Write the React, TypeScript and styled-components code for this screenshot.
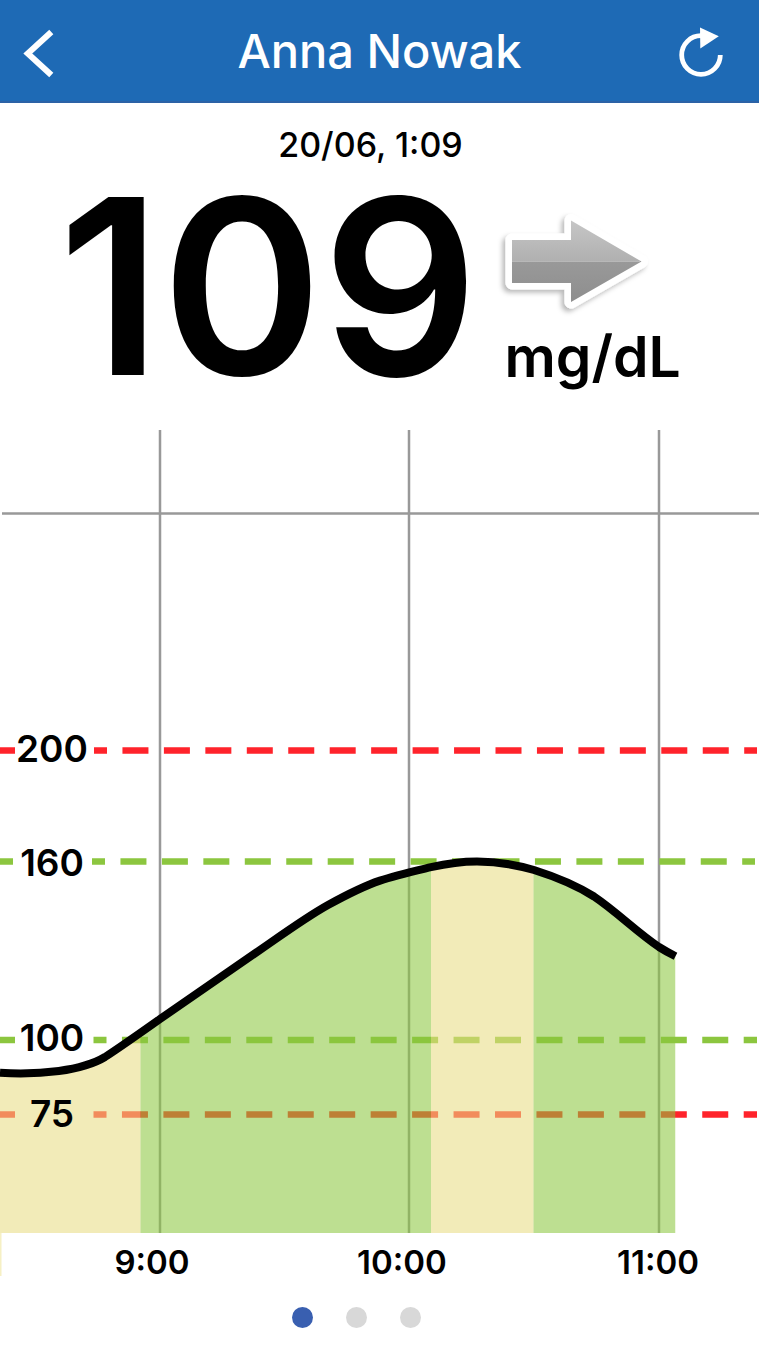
import React, { useState } from "react";
import styled, { createGlobalStyle } from "styled-components";

const GlobalStyle = createGlobalStyle`
  *, *::before, *::after { box-sizing: border-box; }
  body {
    margin: 0;
    background: #fff;
    color: #000;
    font-family: Inter, "Liberation Sans", sans-serif;
  }
`;

const Screen = styled.main`
  display: flex;
  flex-direction: column;
  padding-bottom: 20px;
`;

const TopBar = styled.header`
  display: grid;
  grid-template-columns: 52px 1fr 52px;
  align-items: center;
  height: 103px;
  padding: 0 32px;
  background: #1e6ab5;
  border-bottom: 2px solid #2b62a6;
`;

const IconButton = styled.button`
  display: flex;
  padding: 0;
  border: 0;
  background: none;
  cursor: pointer;
`;

const BackButton = styled(IconButton)`
  margin-left: -16px;
`;

const Title = styled.h1`
  margin: 0;
  color: #fff;
  font-size: 47px;
  line-height: 60px;
  font-weight: 500;
  text-align: center;
`;

const Reading = styled.section`
  display: flex;
  flex-direction: column;
  gap: 20px;
  padding: 22px 18px 41px 0;
`;

const Timestamp = styled.time`
  font-size: 34px;
  line-height: 40px;
  font-weight: 500;
  text-align: center;
`;

const ReadingRow = styled.div`
  display: flex;
  justify-content: center;
  gap: 12px;
  padding-right: 2px;
`;

const Value = styled.strong`
  font-size: 244px;
  line-height: 204px;
  font-weight: 600;
`;

const Side = styled.div`
  display: flex;
  flex-direction: column;
  padding-top: 20px;
`;

const Unit = styled.span`
  padding-left: 14px;
  font-size: 57px;
  line-height: 60px;
  font-weight: 600;
`;

const ChartSvg = styled.svg`
  display: block;
  width: 100%;
  height: auto;
`;

const ChartLabel = styled.text<{ $size: number }>`
  font-size: ${(p) => p.$size}px;
  font-weight: 600;
  text-anchor: middle;
`;

const Pager = styled.nav`
  display: flex;
  justify-content: center;
  gap: 33px;
  padding: 17px 46px 0 0;
`;

const Dot = styled.button<{ $active: boolean }>`
  width: 21px;
  height: 21px;
  padding: 0;
  border: 0;
  border-radius: 50%;
  background: ${(p) => (p.$active ? "#395fb0" : "#d8d8d8")};
  cursor: pointer;
`;

const GREEN = "#8cc63f";
const RED = "#ff232b";

const hours = [
  { label: "9:00", x: 160, labelX: 152 },
  { label: "10:00", x: 409, labelX: 402 },
  { label: "11:00", x: 659, labelX: 658 },
];

const limits = [
  { label: "200", y: 320.5, color: RED, stub: 15, start: 94, end: 757, labelY: 332 },
  { label: "160", y: 431.5, color: GREEN, stub: 13, start: 92, end: 755, labelY: 446 },
  { label: "100", y: 610, color: GREEN, stub: 15, start: 93.5, end: 757, labelY: 621 },
  { label: "75", y: 684.5, color: RED, stub: 15, start: 93.5, end: 757, labelY: 697 },
];

const bands = [
  { from: 0, to: 140.5, color: "#e8dc82" },
  { from: 140.5, to: 431, color: "#8bc73e" },
  { from: 431, to: 533.5, color: "#e8dc82" },
  { from: 533.5, to: 675.5, color: "#8bc73e" },
];

const curve =
  "M0 642.8 C40 645 82 641 105 627 C112 622.5 136 606 160 589 L270 513 C290 499 310 485 328 475 C348 464 364 456 380 450.6 C395 445.500 415 441 431 437.2 C447 433.5 463 431.5 477 431.5 C495 431.5 515 434.5 534 440 C553 446 575 454.5 594 466.5 C617 482 636 501.500 659 517 Q667 522 675.5 526.300";

function Chart() {
  return (
    <ChartSvg viewBox="0 0 759 860" role="img" aria-label="Glucose history">
      <defs>
        <clipPath id="under">
          <path d={`${curve} V803 H0 Z`} />
        </clipPath>
      </defs>
      <g stroke="#999" strokeWidth="2.5">
        <path d="M2 83.500H759" />
        {hours.map((h) => (
          <path key={h.label} d={`M${h.x} 0V803`} />
        ))}
      </g>
      {limits.map((l) => (
        <g key={l.label} stroke={l.color} strokeWidth="6.5">
          <path d={`M0 ${l.y}H${l.stub}`} />
          <path d={`M${l.start} ${l.y}H${l.end}`} strokeDasharray="26 15.450" strokeDashoffset="13" />
        </g>
      ))}
      <g clipPath="url(#under)" fillOpacity="0.57">
        {bands.map((b) => (
          <rect key={b.from} x={b.from} y="400" width={b.to - b.from} height="403" fill={b.color} />
        ))}
      </g>
      <path d="M0.750 803V846" stroke="#f6f0c4" strokeWidth="1.5" />
      <path d={curve} fill="none" stroke="#000" strokeWidth="8" />
      {limits.map((l) => (
        <ChartLabel key={l.label} $size={37} x="52" y={l.labelY}>
          {l.label}
        </ChartLabel>
      ))}
      {hours.map((h) => (
        <ChartLabel key={h.label} $size={33} x={h.labelX} y="844">
          {h.label}
        </ChartLabel>
      ))}
    </ChartSvg>
  );
}

function TrendArrow() {
  const shape = "M22 35H81V15.500L151.500 56.500L81 97V78H22Z";
  return (
    <svg width="170" height="122" viewBox="0 0 170 122" role="img" aria-label="Steady">
      <defs>
        <linearGradient id="metal" x1="0" y1="0" x2="0" y2="1">
          <stop offset="0" stopColor="#c6c6c6" />
          <stop offset="0.5" stopColor="#b0b0b0" />
          <stop offset="0.5" stopColor="#999" />
          <stop offset="1" stopColor="#8e8e8e" />
        </linearGradient>
        <filter id="shade" x="-20%" y="-20%" width="140%" height="140%">
          <feDropShadow dx="-3" dy="3" stdDeviation="2.5" floodColor="#000" floodOpacity="0.28" />
        </filter>
      </defs>
      <path d={shape} fill="#fff" stroke="#fff" strokeWidth="13" strokeLinejoin="round" filter="url(#shade)" />
      <path d={shape} fill="url(#metal)" />
      <path d="M22 56.500H150" stroke="#c0c0c0" strokeWidth="0.800" />
    </svg>
  );
}

export default function App() {
  const [page, setPage] = useState(0);
  return (
    <>
      <GlobalStyle />
      <Screen>
        <TopBar>
          <BackButton aria-label="Back">
            <svg width="44" height="56" viewBox="0 0 44 56">
              <path d="M35.300 9L11.800 30.500L35.300 52" fill="none" stroke="#fff" strokeWidth="6" />
            </svg>
          </BackButton>
          <Title>Anna Nowak</Title>
          <IconButton aria-label="Refresh">
            <svg width="52" height="56" viewBox="0 0 52 56">
              <path d="M26 12.700A19.300 19.300 0 1 0 45.300 32" fill="none" stroke="#fff" strokeWidth="4.800" />
              <path d="M25 4.500L43.800 13.200L25.300 25.500Z" fill="#fff" />
            </svg>
          </IconButton>
        </TopBar>
        <Reading>
          <Timestamp>20/06, 1:09</Timestamp>
          <ReadingRow>
            <Value>109</Value>
            <Side>
              <TrendArrow />
              <Unit>mg/dL</Unit>
            </Side>
          </ReadingRow>
        </Reading>
        <Chart />
        <Pager aria-label="Pages">
          {[0, 1, 2].map((i) => (
            <Dot
              key={i}
              $active={i === page}
              aria-label={`Page ${i + 1}`}
              aria-current={i === page}
              onClick={() => setPage(i)}
            />
          ))}
        </Pager>
      </Screen>
    </>
  );
}
